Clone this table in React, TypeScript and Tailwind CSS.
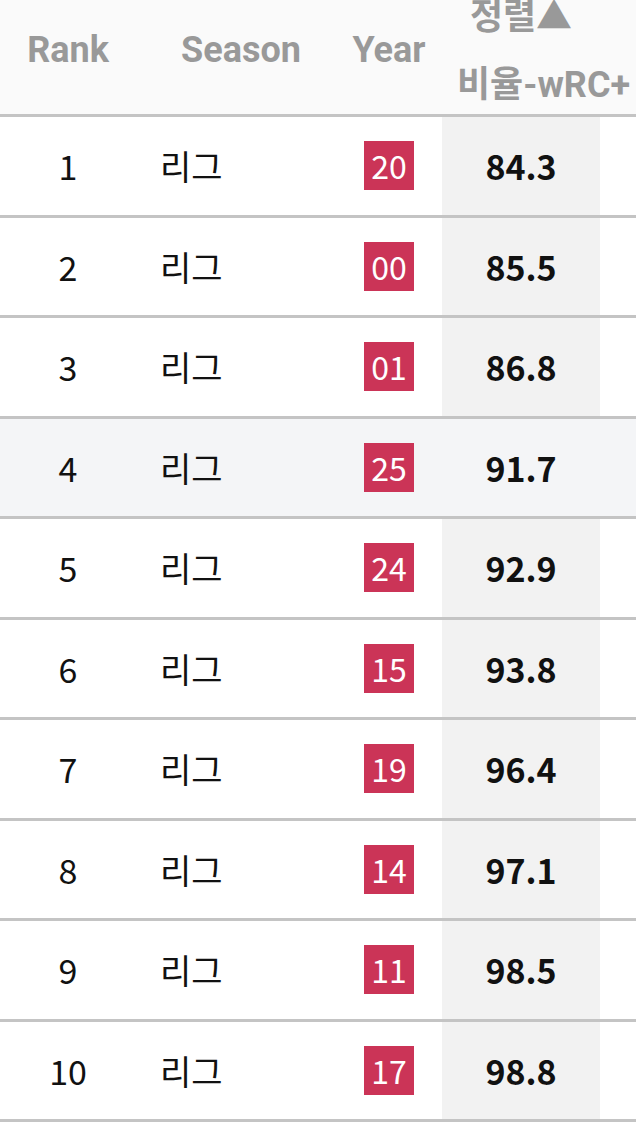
import React from 'react';

const rows = [
    { rank: 1, year: '20', value: '84.3' },
    { rank: 2, year: '00', value: '85.5' },
    { rank: 3, year: '01', value: '86.8' },
    { rank: 4, year: '25', value: '91.7', hover: true },
    { rank: 5, year: '24', value: '92.9' },
    { rank: 6, year: '15', value: '93.8' },
    { rank: 7, year: '19', value: '96.4' },
    { rank: 8, year: '14', value: '97.1' },
    { rank: 9, year: '11', value: '98.5' },
    { rank: 10, year: '17', value: '98.8' },
];

const App: React.FC = () => {
    return (
        <div className="w-[636px] h-[1130px] overflow-hidden bg-white font-['Noto_Sans_CJK_KR',sans-serif] text-[34px] text-[#111]">
            <div className="grid grid-cols-[136px_200px_106px_158px_1fr] h-[117px] bg-[#fafafa] border-b-[3px] border-[#c4c4c4] text-[#999] text-[36px] font-bold font-['Roboto','Noto_Sans_CJK_KR',sans-serif] leading-[48px]">
                <div className="text-center pt-[26px]">Rank</div>
                <div className="text-center pt-[26px] pl-[10px]">Season</div>
                <div className="text-center pt-[26px]">Year</div>
                <div className="overflow-visible whitespace-nowrap px-[15px]">
                    <div className="-mt-[7px] flex flex-col gap-[20px]">
                        <span className="text-center">정렬▲</span>
                        <span>비율-wRC+</span>
                    </div>
                </div>
                <div></div>
            </div>

            {rows.map((r) => (
                <div
                    key={r.rank}
                    className={`grid grid-cols-[136px_200px_106px_158px_1fr] h-[100.5px] border-b-[3px] border-[#c4c4c4] ${r.hover ? 'bg-[#f4f5f7]' : 'bg-white'}`}
                >
                    <div className="flex items-center justify-center">{r.rank}</div>
                    <div className="flex items-center pl-[24px]">리그</div>
                    <div className="flex items-center justify-center">
                        <span className="h-[49px] leading-[49px] px-[7.5px] text-[32px] bg-[#cb3457] text-white">{r.year}</span>
                    </div>
                    <div className={`flex items-center justify-center font-bold ${r.hover ? '' : 'bg-[#f2f2f2]'}`}>{r.value}</div>
                    <div></div>
                </div>
            ))}
        </div>
    );
};

export default App;
